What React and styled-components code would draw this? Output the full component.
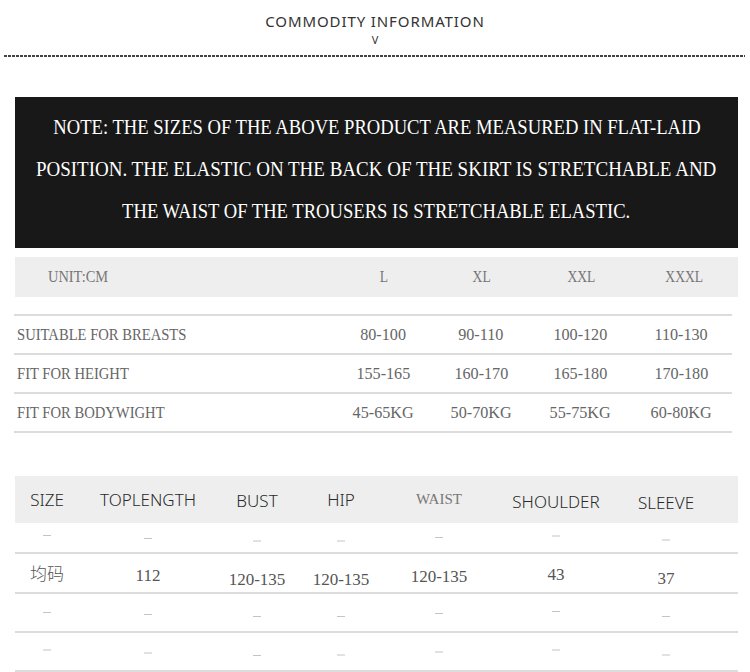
import React from "react";
import styled, { createGlobalStyle } from "styled-components";

const GlobalStyle = createGlobalStyle`
  html, body { margin: 0; padding: 0; background: #fff; }
  body { font-family: "Noto Sans", "Liberation Sans", sans-serif; }
`;

const Page = styled.div`
  width: 750px;
  padding-bottom: 1px;
`;

const Heading = styled.header`
  display: flex;
  flex-direction: column;
  align-items: center;
  padding-top: 11px;
`;

const Title = styled.h2`
  margin: 0;
  font-size: 15px;
  line-height: 20px;
  font-weight: 400;
  letter-spacing: 0.9px;
  color: #333;
`;

const Chevron = styled.div`
  margin-top: 2px;
  font-size: 11px;
  line-height: 14px;
  color: #333;
`;

const DashedRule = styled.div`
  margin: 8px 5px 0 4px;
  height: 2px;
  background: repeating-linear-gradient(90deg, #444 0 3px, transparent 3px 4px);
`;

const NoteBox = styled.section`
  margin: 40px 12px 0 15px;
  height: 151px;
  box-sizing: border-box;
  padding-top: 9px;
  background: #181818;
  display: flex;
  flex-direction: column;
  align-items: center;
  color: #fff;
  font-family: "Liberation Serif", serif;
  font-size: 20px;
  line-height: 42px;
`;

const Narrow = styled.span`
  display: inline-block;
  white-space: nowrap;
  transform: scaleX(${(p) => p.$sx ?? 0.88});
  transform-origin: ${(p) => p.$origin ?? "center"};
`;

/* size chart */
const SizeChart = styled.section`
  margin: 9px 12px 0 15px;
  font-family: "Liberation Serif", serif;
`;

const chartCols = "320px 98px 98px 100px 1fr";

const ChartHead = styled.div`
  display: grid;
  grid-template-columns: ${chartCols};
  height: 40px;
  align-items: center;
  background: #eeeeee;
  font-size: 16px;
  color: #777;
`;

const ChartRows = styled.div`
  margin: 17px 6px 0 -1px;
  border-top: 2px solid #dcdcdc;
`;

const ChartRow = styled.div`
  display: grid;
  grid-template-columns: ${chartCols};
  height: 39px;
  box-sizing: border-box;
  align-items: center;
  border-bottom: 2px solid #dcdcdc;
  font-size: 17px;
  color: #666;
`;

const Cell = styled.div`
  text-align: ${(p) => (p.$left ? "left" : "center")};
  padding-left: ${(p) => p.$indent ?? 0}px;
  white-space: nowrap;
`;

/* spec table */
const specCols = "64px 138px 80px 88px 108px 126px 94px 1fr";

const SpecTable = styled.section`
  margin: 43px 12px 0 15px;
`;

const SpecHead = styled.div`
  display: grid;
  grid-template-columns: ${specCols};
  height: 47px;
  align-items: center;
  background: #eeeeee;
  font-size: 17px;
  font-weight: 300;
  color: #2a2a2a;
`;

const HeadLabel = styled.div`
  text-align: center;
  white-space: nowrap;
  transform: translateY(${(p) => p.$dy ?? 0}px);
  font-family: ${(p) => (p.$serif ? '"Liberation Serif", serif' : "inherit")};
  font-size: ${(p) => (p.$serif ? "15px" : "inherit")};
  color: ${(p) => (p.$serif ? "#777" : "inherit")};
`;

const SpecRow = styled.div`
  display: grid;
  grid-template-columns: ${specCols};
  height: ${(p) => p.$h}px;
  box-sizing: border-box;
  align-items: center;
  border-bottom: 2px solid #dcdcdc;
  font-family: "Liberation Serif", "Noto Sans CJK SC", serif;
  font-size: 17px;
  color: #555;
`;

const Value = styled.div`
  text-align: center;
  white-space: nowrap;
  transform: translateY(${(p) => p.$dy ?? 0}px);
`;

const Dash = styled.span`
  display: block;
  margin: 0 auto;
  width: 8px;
  height: 1px;
  background: #c4c4c4;
  transform: translateY(${(p) => p.$dy ?? 0}px);
`;

const CjkText = styled.span`
  font-family: "Noto Sans CJK SC", sans-serif;
  font-weight: 300;
  font-size: 17px;
`;

const sizes = ["L", "XL", "XXL", "XXXL"];

const chartRows = [
  { label: "SUITABLE FOR BREASTS", values: ["80-100", "90-110", "100-120", "110-130"] },
  { label: "FIT FOR HEIGHT", values: ["155-165", "160-170", "165-180", "170-180"] },
  { label: "FIT FOR BODYWIGHT", values: ["45-65KG", "50-70KG", "55-75KG", "60-80KG"] },
];

const noteLines = [
  { text: "NOTE: THE SIZES OF THE ABOVE PRODUCT ARE MEASURED IN FLAT-LAID", sx: 0.93 },
  { text: "POSITION. THE ELASTIC ON THE BACK OF THE SKIRT IS STRETCHABLE AND", sx: 0.95 },
  { text: "THE WAIST OF THE TROUSERS IS STRETCHABLE ELASTIC.", sx: 0.93 },
];

const specHead = [
  { text: "SIZE" },
  { text: "TOPLENGTH" },
  { text: "BUST", dy: 1 },
  { text: "HIP" },
  { text: "WAIST", serif: true },
  { text: "SHOULDER", dy: 2 },
  { text: "SLEEVE", dy: 3 },
];

const dashRows = [
  { h: 31, dy: [-2, 1, 3.5, 3.5, 0, -1.5, 2.5] },
  null,
  { h: 39, dy: [0, 2, 4, 4, 1, -1, 4] },
  { h: 39, dy: [-1.5, 1.5, 4, 3.5, 0.5, -1.5, 3.5] },
];

const sizeRow = [
  { v: <CjkText>均码</CjkText>, dy: -1 },
  { v: "112", dy: 3 },
  { v: "120-135", dy: 7 },
  { v: "120-135", dy: 7 },
  { v: "120-135", dy: 4 },
  { v: "43", dy: 2 },
  { v: "37", dy: 6 },
];

export default function App() {
  return (
    <Page>
      <GlobalStyle />
      <Heading>
        <Title>COMMODITY INFORMATION</Title>
        <Chevron>V</Chevron>
      </Heading>
      <DashedRule />

      <NoteBox>
        {noteLines.map((l) => (
          <Narrow key={l.text} $sx={l.sx}>
            {l.text}
          </Narrow>
        ))}
      </NoteBox>

      <SizeChart>
        <ChartHead>
          <Cell $left $indent={33}>
            <Narrow $sx={0.9} $origin="left">UNIT:CM</Narrow>
          </Cell>
          {sizes.map((s) => (
            <Cell key={s}>
              <Narrow $sx={0.85}>{s}</Narrow>
            </Cell>
          ))}
        </ChartHead>
        <ChartRows>
          {chartRows.map((row) => (
            <ChartRow key={row.label}>
              <Cell $left $indent={3}>
                <Narrow $sx={0.86} $origin="left">{row.label}</Narrow>
              </Cell>
              {row.values.map((v) => (
                <Cell key={v}>
                  <Narrow $sx={0.95}>{v}</Narrow>
                </Cell>
              ))}
            </ChartRow>
          ))}
        </ChartRows>
      </SizeChart>

      <SpecTable>
        <SpecHead>
          {specHead.map((h) => (
            <HeadLabel key={h.text} $dy={h.dy} $serif={h.serif}>
              {h.text}
            </HeadLabel>
          ))}
        </SpecHead>
        {dashRows.map((row, i) =>
          row ? (
            <SpecRow key={i} $h={row.h}>
              {row.dy.map((dy, j) => (
                <Value key={j}>
                  <Dash $dy={dy} />
                </Value>
              ))}
            </SpecRow>
          ) : (
            <SpecRow key={i} $h={40}>
              {sizeRow.map((c, j) => (
                <Value key={j} $dy={c.dy}>
                  {c.v}
                </Value>
              ))}
            </SpecRow>
          )
        )}
      </SpecTable>
    </Page>
  );
}
